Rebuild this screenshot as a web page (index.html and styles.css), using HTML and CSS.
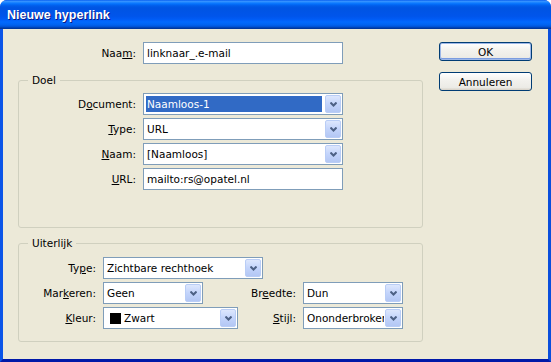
FILE: index.html
```html
<!DOCTYPE html>
<html lang="nl">
<head>
  <meta charset="UTF-8" />
  <title>Nieuwe hyperlink</title>
  <link rel="stylesheet" href="styles.css">
</head>
<body>

  <div class="window">
    <div class="titlebar">Nieuwe hyperlink</div>

    <div class="client">
      <div class="main">

        <div class="row top-row">
          <span class="label">Naa<u>m</u>:</span>
          <div class="textbox">linknaar_.e-mail</div>
        </div>

        <!-- Doel -->
        <fieldset class="group">
          <legend>Doel</legend>
          <div class="rows doel-rows">
            <div class="row">
              <span class="label">D<u>o</u>cument:</span>
              <div class="combo">
                <span class="val selected">Naamloos-1</span>
                <span class="arrow"><svg width="7" height="5" viewBox="0 0 7 5"><path d="M0.5 0.5 L3.5 3.5 L6.5 0.5" /></svg></span>
              </div>
            </div>
            <div class="row">
              <span class="label"><u>T</u>ype:</span>
              <div class="combo">
                <span class="val">URL</span>
                <span class="arrow"><svg width="7" height="5" viewBox="0 0 7 5"><path d="M0.5 0.5 L3.5 3.5 L6.5 0.5" /></svg></span>
              </div>
            </div>
            <div class="row">
              <span class="label"><u>N</u>aam:</span>
              <div class="combo">
                <span class="val">[Naamloos]</span>
                <span class="arrow"><svg width="7" height="5" viewBox="0 0 7 5"><path d="M0.5 0.5 L3.5 3.5 L6.5 0.5" /></svg></span>
              </div>
            </div>
            <div class="row">
              <span class="label"><u>U</u>RL:</span>
              <div class="textbox">mailto:rs@opatel.nl</div>
            </div>
          </div>
        </fieldset>

        <!-- Uiterlijk -->
        <fieldset class="group uiterlijk">
          <legend>Uiterlijk</legend>
          <div class="look-grid">
            <span class="label">Ty<u>p</u>e:</span>
            <div class="combo wide">
              <span class="val">Zichtbare rechthoek</span>
              <span class="arrow"><svg width="7" height="5" viewBox="0 0 7 5"><path d="M0.5 0.5 L3.5 3.5 L6.5 0.5" /></svg></span>
            </div>
            <span></span>
            <span></span>

            <span class="label">Mar<u>k</u>eren:</span>
            <div class="combo small">
              <span class="val">Geen</span>
              <span class="arrow"><svg width="7" height="5" viewBox="0 0 7 5"><path d="M0.5 0.5 L3.5 3.5 L6.5 0.5" /></svg></span>
            </div>
            <span class="label">Br<u>e</u>edte:</span>
            <div class="combo">
              <span class="val">Dun</span>
              <span class="arrow"><svg width="7" height="5" viewBox="0 0 7 5"><path d="M0.5 0.5 L3.5 3.5 L6.5 0.5" /></svg></span>
            </div>

            <span class="label"><u>K</u>leur:</span>
            <div class="combo">
              <span class="val"><i class="swatch"></i>Zwart</span>
              <span class="arrow"><svg width="7" height="5" viewBox="0 0 7 5"><path d="M0.5 0.5 L3.5 3.5 L6.5 0.5" /></svg></span>
            </div>
            <span class="label"><u>S</u>tijl:</span>
            <div class="combo">
              <span class="val">Ononderbroken</span>
              <span class="arrow"><svg width="7" height="5" viewBox="0 0 7 5"><path d="M0.5 0.5 L3.5 3.5 L6.5 0.5" /></svg></span>
            </div>
          </div>
        </fieldset>

      </div>

      <div class="buttons">
        <button class="btn default">OK</button>
        <button class="btn">Annuleren</button>
      </div>
    </div>
  </div>

</body>
</html>
```

FILE: styles.css
```css
body {
  margin: 0;
  background: #ffffff;
  font-family: 'DejaVu Sans', sans-serif;
  font-size: 10.5px;
  color: #000;
}

.window {
  width: 551px;
  height: 362px;
  display: flex;
  flex-direction: column;
  border-radius: 7px 7px 0 0;
  overflow: hidden;
  background: #0842d6;
}

/* Title bar (XP Luna) */
.titlebar {
  height: 29px;
  flex: none;
  padding-left: 7px;
  line-height: 31px;
  color: #fff;
  font-family: 'Liberation Sans', sans-serif;
  font-weight: bold;
  font-size: 12.5px;
  text-shadow: 1px 1px 0 #0a1883;
  background: linear-gradient(to bottom,
    #0058ee 0%, #3a93ff 4%, #288eff 7%, #127dff 10%, #036ffc 14%,
    #0262ee 18%, #0057e5 24%, #0054e3 30%, #0055eb 56%, #005bf5 66%,
    #026afe 76%, #0062ef 86%, #0052d6 92%, #0040ab 96%, #003092 100%);
}

.client {
  flex: 1;
  display: flex;
  gap: 16px;
  padding: 13px 0 0 15px;
  background: #ece9d8;
  border-left: 3px solid #0b55e8;
  border-right: 3px solid #0a4edc;
  border-bottom: 3px solid #0019a8;
}

.main {
  width: 405px;
}

.row {
  display: flex;
  align-items: center;
  gap: 7px;
  height: 22px;
}

.label {
  text-align: right;
  white-space: nowrap;
}

.top-row .label {
  width: 118px;
}

.textbox {
  box-sizing: border-box;
  width: 200px;
  height: 22px;
  padding-left: 3px;
  line-height: 20px;
  border: 1px solid #7f9db9;
  background: #fff;
}

/* Group boxes */
.group {
  margin: 9px 0 0;
  padding: 0;
  border: 1px solid #d0d0bf;
  border-radius: 3px;
}

.group legend {
  margin-left: 9px;
  padding: 0 4px;
  line-height: 14px;
}

.rows {
  display: flex;
  flex-direction: column;
  gap: 3px;
}

.doel-rows {
  padding: 6px 0 37px;
}

.doel-rows .label {
  width: 117px;
}

.uiterlijk {
  margin-top: 8px;
}

.look-grid {
  display: grid;
  grid-template-columns: 77px 135px 51px 100px;
  grid-auto-rows: 22px;
  column-gap: 7px;
  row-gap: 3px;
  align-items: center;
  padding: 7px 0 12px;
}

/* Combo boxes */
.combo {
  box-sizing: border-box;
  width: 200px;
  height: 22px;
  display: flex;
  border: 1px solid #7f9db9;
  background: #fff;
}

.look-grid .combo {
  width: 100%;
}

.look-grid .combo.wide {
  width: 160px;
}

.look-grid .combo.small {
  width: 100px;
}

.combo .val {
  flex: 1;
  display: flex;
  align-items: center;
  padding-left: 3px;
  overflow: hidden;
  white-space: nowrap;
}

.combo .val.selected {
  margin: 2px;
  padding-left: 1px;
  background: #316ac5;
  color: #fff;
}

.swatch {
  width: 11px;
  height: 11px;
  margin: 0 3px;
  background: #000;
  flex: none;
}

.combo .arrow {
  box-sizing: border-box;
  width: 16px;
  margin: 1px;
  display: flex;
  align-items: center;
  justify-content: center;
  border: 1px solid #b9cdf6;
  border-radius: 2px;
  background: linear-gradient(to bottom, #dde7fd, #c3d4fb 50%, #b3c7f4);
}

.combo .arrow path {
  fill: none;
  stroke: #4d6185;
  stroke-width: 2;
}

/* Buttons */
.buttons {
  display: flex;
  flex-direction: column;
  gap: 11px;
}

.btn {
  width: 93px;
  height: 19px;
  padding: 0;
  font-family: inherit;
  font-size: 10.5px;
  color: #000;
  border: 1px solid #003c74;
  border-radius: 3px;
  background: linear-gradient(to bottom, #ffffff, #f3f2ee 40%, #ecebe6 85%, #d6d0c5);
}

.btn.default {
  box-shadow: inset 0 0 0 1px #9db7e8, inset 0 -1px 0 1px #7b9ce0;
}
```
